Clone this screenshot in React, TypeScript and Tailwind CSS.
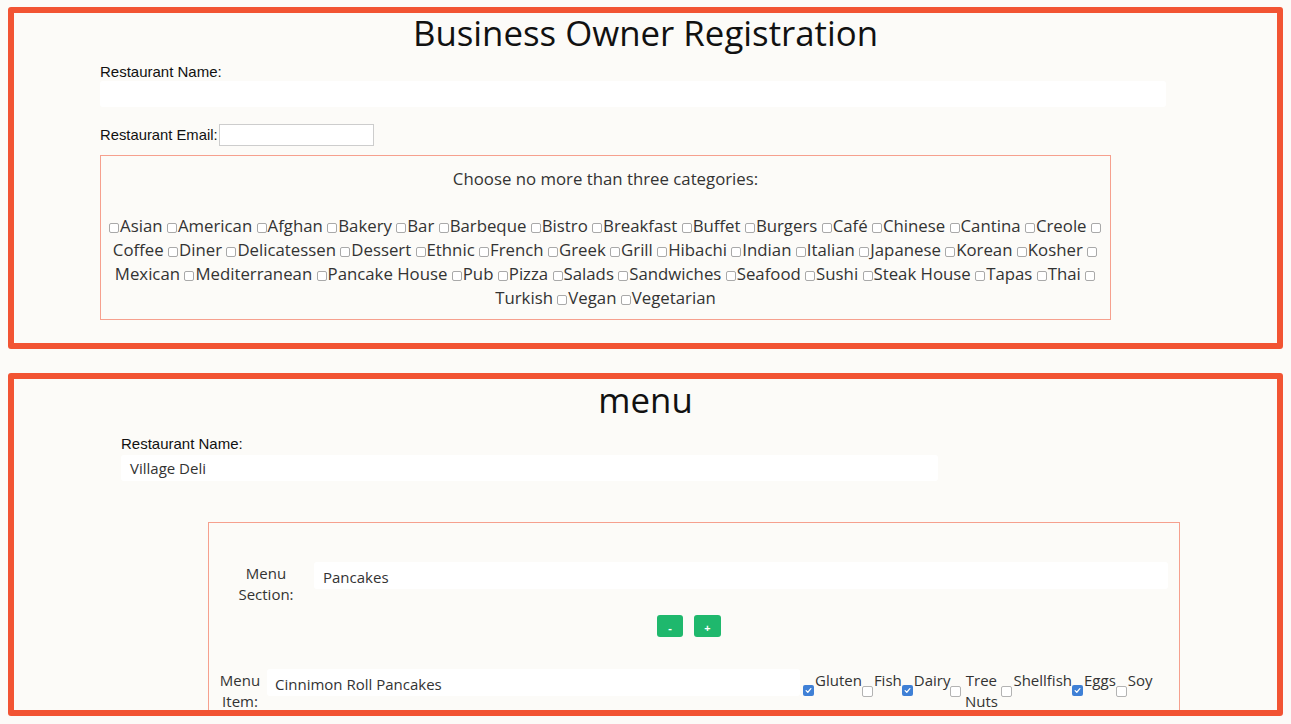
import type { ReactNode } from 'react';

const CATEGORIES = [
  'Asian', 'American', 'Afghan', 'Bakery', 'Bar', 'Barbeque', 'Bistro', 'Breakfast', 'Buffet', 'Burgers',
  'Café', 'Chinese', 'Cantina', 'Creole', 'Coffee', 'Diner', 'Delicatessen', 'Dessert', 'Ethnic', 'French',
  'Greek', 'Grill', 'Hibachi', 'Indian', 'Italian', 'Japanese', 'Korean', 'Kosher', 'Mexican', 'Mediterranean',
  'Pancake House', 'Pub', 'Pizza', 'Salads', 'Sandwiches', 'Seafood', 'Sushi', 'Steak House', 'Tapas', 'Thai',
  'Turkish', 'Vegan', 'Vegetarian',
];

const ALLERGENS: { name: ReactNode; checked: boolean; wide?: boolean }[] = [
  { name: 'Gluten', checked: true },
  { name: 'Fish', checked: false },
  { name: 'Dairy', checked: true },
  { name: 'Tree Nuts', checked: false, wide: true },
  { name: 'Shellfish', checked: false },
  { name: 'Eggs', checked: true },
  { name: 'Soy', checked: false },
];

const openSans = "font-['Open_Sans',sans-serif]";
const helv = "font-['Liberation_Sans',Arial,sans-serif]";

function SmallBox() {
  return (
    <span className="inline-block w-[10px] h-[10px] mr-[1px] align-[-1px] rounded-[2px] border border-[#a9a9a9] bg-white" />
  );
}

function CheckBox({ checked }: { checked: boolean }) {
  if (checked) {
    return (
      <span className="flex items-center justify-center shrink-0 w-[11px] h-[11px] mt-[16px] rounded-[2px] bg-[#3f80d6]">
        <svg width="7" height="7" viewBox="0 0 8 8" fill="none">
          <path d="M1.3 4.2 3.2 6 6.7 1.8" stroke="white" strokeWidth="1.4" strokeLinecap="round" strokeLinejoin="round" />
        </svg>
      </span>
    );
  }
  return <span className="shrink-0 w-[11px] h-[11px] mt-[17px] rounded-[2px] border border-[#b3b3b3] bg-white" />;
}

export default function App() {
  return (
    <div className={`min-h-screen bg-[#fcfbf8] pt-[7px] px-[8px] ${openSans}`}>
      {/* Registration */}
      <section className="h-[342px] border-[6px] border-[#f25433] rounded-[3px] overflow-hidden">
        <h1 className="text-[34.8px] leading-[40px] text-center text-[#111]">Business Owner Registration</h1>
        <div className="pl-[86px]">
          <label className={`block mt-[11px] text-[15px] leading-[16px] text-[#111] ${helv}`}>Restaurant Name:</label>
          <div className="mt-[1px] w-[1066px] h-[26px] rounded-[3px] bg-white" />
          <div className="flex items-center mt-[17px]">
            <label className={`text-[14.8px] leading-[16px] text-[#111] ${helv}`}>Restaurant Email:</label>
            <div className="ml-[1px] w-[155px] h-[22px] border border-[#cdcdcd] bg-white" />
          </div>
          <div className="mt-[9px] w-[1011px] h-[165px] border border-[#f6a08e]">
            <p className="pt-[11px] text-[16.8px] leading-[24px] text-center text-[#333]">Choose no more than three categories:</p>
            <div className="mt-[23px] text-[16.8px] leading-[24px] text-center text-[#333]">
              {CATEGORIES.map((c) => (
                <span key={c}>
                  <SmallBox />
                  {c}{' '}
                </span>
              ))}
            </div>
          </div>
        </div>
      </section>

      {/* Menu */}
      <section className="mt-[24px] h-[343px] border-[6px] border-[#f25433] rounded-[3px] overflow-hidden">
        <h1 className="mt-[1px] text-[34.8px] leading-[40px] text-center text-[#111]">menu</h1>
        <div className="pl-[107px]">
          <label className={`block mt-[16px] text-[15px] leading-[16px] text-[#111] ${helv}`}>Restaurant Name:</label>
          <div className="mt-[3px] w-[817px] h-[26px] px-[9px] rounded-[3px] bg-white text-[15px] leading-[26px] text-[#333]">Village Deli</div>
        </div>

        <div className="ml-[194px] mt-[41px] w-[972px] h-[300px] border border-[#f6a08e] pt-[39px]">
          <div className="flex items-start">
            <div className="ml-[17px] w-[80px] pt-[1px] text-center text-[15px] leading-[21px] text-[#333]">Menu<br />Section:</div>
            <div className="ml-[8px] w-[854px] h-[27px] px-[9px] pt-[2px] rounded-[3px] bg-white text-[15px] leading-[27px] text-[#333]">Pancakes</div>
          </div>

          <div className="flex justify-center gap-[11px] pr-[10px] mt-[10px]">
            <button className="w-[26px] h-[22px] rounded-[3px] bg-[#1fb86d] text-white text-[11px] font-bold leading-none flex items-end justify-center pb-[4px]">-</button>
            <button className="w-[27px] h-[22px] rounded-[3px] bg-[#1fb86d] text-white text-[11px] font-bold leading-none flex items-end justify-center pb-[4px]">+</button>
          </div>

          <div className="flex items-start mt-[32px]">
            <div className="ml-[6px] w-[50px] pt-[1px] text-center text-[15px] leading-[21px] text-[#333]">Menu<br />Item:</div>
            <div className="ml-[2px] w-[533px] h-[27px] px-[8px] pt-[2px] rounded-[3px] bg-white text-[15px] leading-[27px] text-[#333]">Cinnimon Roll Pancakes</div>
            <div className="ml-[3px] flex items-start text-[15px] leading-[21px] text-[#333]">
              {ALLERGENS.map((a, i) => (
                <div key={i} className="flex items-start">
                  <CheckBox checked={a.checked} />
                  <span className={a.wide ? 'mt-[1px] w-[40px] text-center' : 'mt-[1px] ml-[1px]'}>
                    {a.wide ? <>Tree<br />Nuts</> : a.name}
                  </span>
                </div>
              ))}
            </div>
          </div>
        </div>
      </section>
    </div>
  );
}
